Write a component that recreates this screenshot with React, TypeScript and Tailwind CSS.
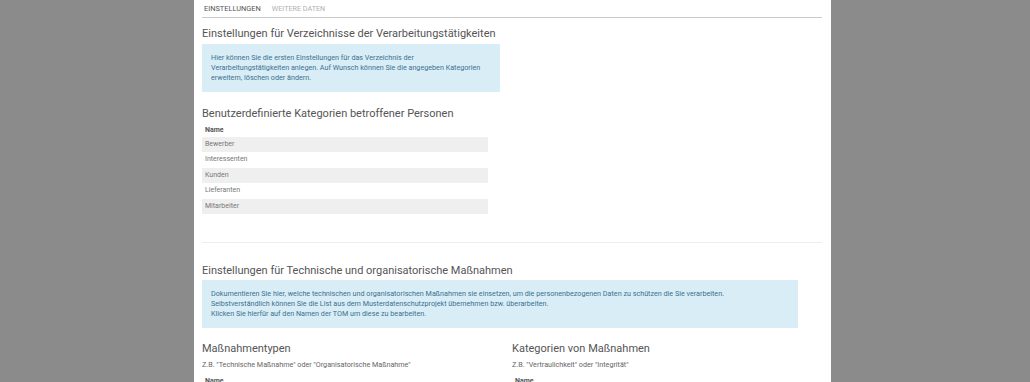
import React from "react";

const rows = ["Bewerber", "Interessenten", "Kunden", "Lieferanten", "Mitarbeiter"];

export default function App() {
  return (
    <div
      className="w-[1030px] h-[382px] bg-[#8b8b8b] overflow-hidden flex"
      style={{ fontFamily: "Roboto, 'Open Sans', sans-serif" }}
    >
      <div className="ml-[194px] w-[637px] h-full bg-white pl-[8px] pr-[9px]">
        {/* Tabs */}
        <div className="flex items-end h-[18px] border-b border-[#c8c8c8] pl-[2px]">
          <div className="text-[7.4px] leading-[9px] text-[#555] pb-[4px] pr-[11px]">EINSTELLUNGEN</div>
          <div className="text-[7.2px] leading-[9px] text-[#b0b0b0] pb-[4px]">WEITERE DATEN</div>
        </div>

        <h1 className="mt-[8px] text-[11px] leading-[16px] text-[#555] font-normal">
          Einstellungen für Verzeichnisse der Verarbeitungstätigkeiten
        </h1>
        <div className="mt-[2px] w-[298px] bg-[#d9edf7] text-[#3b7190] text-[7.2px] leading-[10px] px-[9px] pt-[9px] pb-[9px]">
          Hier können Sie die ersten Einstellungen für das Verzeichnis der
          <br />
          Verarbeitungstätigkeiten anlegen. Auf Wunsch können Sie die angegeben Kategorien
          <br />
          erweitern, löschen oder ändern.
        </div>

        <h2 className="mt-[14px] text-[11px] leading-[16px] text-[#555] font-normal">
          Benutzerdefinierte Kategorien betroffener Personen
        </h2>
        <div className="mt-[2px] w-[286px]">
          <div className="text-[7px] leading-[13px] font-bold text-[#555] pl-[3px]">Name</div>
          {rows.map((r, i) => (
            <div
              key={r}
              className={`text-[7px] h-[15.4px] leading-[15.4px] text-[#777] pl-[3px] ${i % 2 === 0 ? "bg-[#efefef]" : "bg-white"}`}
            >
              {r}
            </div>
          ))}
        </div>

        <div className="mt-[28px] border-t border-[#eeeeee]" />

        <h2 className="mt-[20px] text-[11px] leading-[16px] text-[#555] font-normal">
          Einstellungen für Technische und organisatorische Maßnahmen
        </h2>
        <div className="mt-[1px] w-[596px] bg-[#d9edf7] text-[#3b7190] text-[7.2px] leading-[10px] px-[9px] pt-[9px] pb-[9px]">
          Dokumentieren Sie hier, welche technischen und organisatorischen Maßnahmen sie einsetzen, um die personenbezogenen Daten zu schützen die Sie verarbeiten.
          <br />
          Selbstverständlich können Sie die List aus dem Musterdatenschutzprojekt übernehmen bzw. überarbeiten.
          <br />
          Klicken Sie hierfür auf den Namen der TOM um diese zu bearbeiten.
        </div>

        <div className="mt-[13px] grid grid-cols-[310px_1fr]">
          <div>
            <h3 className="text-[11px] leading-[16px] text-[#555] font-normal">Maßnahmentypen</h3>
            <div className="mt-[3px] text-[7.2px] leading-[10px] text-[#666]">
              Z.B. "Technische Maßnahme" oder "Organisatorische Maßnahme"
            </div>
            <div className="mt-[6px] text-[7px] leading-[10px] font-bold text-[#555] pl-[3px]">Name</div>
          </div>
          <div>
            <h3 className="text-[11px] leading-[16px] text-[#555] font-normal">Kategorien von Maßnahmen</h3>
            <div className="mt-[3px] text-[7.2px] leading-[10px] text-[#666]">
              Z.B. "Vertraulichkeit" oder "Integrität"
            </div>
            <div className="mt-[6px] text-[7px] leading-[10px] font-bold text-[#555] pl-[3px]">Name</div>
          </div>
        </div>
      </div>
    </div>
  );
}
